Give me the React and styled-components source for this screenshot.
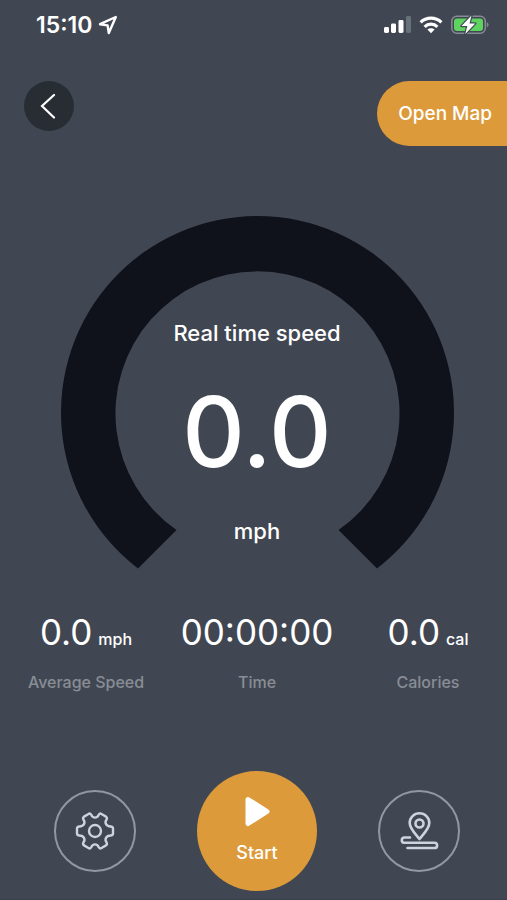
import React from 'react'
import styled, { createGlobalStyle } from 'styled-components'

const GlobalStyle = createGlobalStyle`
  * {
    box-sizing: border-box;
  }
  body {
    margin: 0;
    background: #414752;
  }
`
const Screen = styled.div`
  display: flex;
  flex-direction: column;
  min-height: 100vh;
  border-bottom: 1px solid #3b3d49;
  background: #414752;
  color: #fff;
  font-family: 'Inter', 'Liberation Sans', sans-serif;
`
const StatusBar = styled.header`
  display: flex;
  align-items: center;
  justify-content: space-between;
  height: 50px;
  padding: 0 18px 0 36px;
`
const StatusGroup = styled.div`
  display: flex;
  align-items: center;
  gap: ${props => props.$gap};
`
const Clock = styled.span`
  font-size: 23px;
  font-weight: 600;
  line-height: 28px;
`
const TopBar = styled.nav`
  display: flex;
  align-items: flex-start;
  justify-content: space-between;
  padding: 31px 0 0 24px;
`
const BackButton = styled.button`
  display: flex;
  align-items: center;
  justify-content: center;
  width: 50px;
  height: 50px;
  padding: 0;
  border: 0;
  border-radius: 50%;
  background: #272d33;
`
const MapButton = styled.button`
  height: 65px;
  padding: 0 15px 0 21px;
  border: 0;
  border-radius: 33px 0 0 33px;
  background: #dc9a3a;
  color: #fff;
  font: 500 19px/24px 'Inter', sans-serif;
`
const Main = styled.main`
  display: flex;
  flex-direction: column;
  padding: 69px 0 0 7px;
`
const Gauge = styled.section`
  display: grid;
  justify-items: center;

  > * {
    grid-area: 1 / 1;
  }
`
const Readout = styled.div`
  display: flex;
  flex-direction: column;
  align-items: center;
  gap: 34px;
  padding-top: 103px;
`
const GaugeText = styled.span`
  font-size: 22px;
  font-weight: 500;
  line-height: 30px;
`
const Speed = styled.strong`
  font-size: 97px;
  font-weight: 500;
  line-height: 100px;
`
const Stats = styled.dl`
  display: grid;
  grid-template-columns: repeat(3, 1fr);
  gap: 13px;
  margin: 40px 0 0;
`
const Stat = styled.div`
  display: flex;
  flex-direction: column-reverse;
  align-items: center;
  gap: 16px;
`
const StatLabel = styled.dt`
  color: #888d96;
  font-size: 16px;
  font-weight: 500;
  line-height: 24px;
`
const StatValue = styled.dd`
  display: flex;
  align-items: baseline;
  gap: 6px;
  margin: 0;
  font-size: 35px;
  line-height: 44px;
  white-space: nowrap;
`
const Unit = styled.small`
  font-size: 16px;
  font-weight: 500;
  line-height: 20px;
`
const Controls = styled.footer`
  display: flex;
  align-items: center;
  justify-content: space-between;
  padding: 77px 47px 0 47px;
`
const RoundButton = styled.button`
  display: flex;
  align-items: center;
  justify-content: center;
  width: 82px;
  height: 82px;
  padding: 0;
  border: 2px solid #9297a1;
  border-radius: 50%;
  background: transparent;
  color: #ced2dc;
`
const StartButton = styled.button`
  display: flex;
  flex-direction: column;
  align-items: center;
  gap: 14px;
  width: 120px;
  height: 120px;
  padding: 25px 0 0;
  border: 0;
  border-radius: 50%;
  background: #dc9a3a;
  color: #fff;
  font: 500 18px/24px 'Inter', sans-serif;
`

const LocationIcon = () =>
  <svg width="20" height="20" viewBox="0 0 20 20" fill="none" stroke="#fff" strokeWidth="2.4" strokeLinejoin="round">
    <path d="M17.8 2 L2 9.2 L9.6 10.4 L10.8 18 Z" />
  </svg>

const SignalIcon = () =>
  <svg width="27" height="18" viewBox="0 0 27 18" fill="#fff">
    <rect x="0" y="11" width="5" height="6" rx="1.4" />
    <rect x="7" y="7.5" width="5" height="9.5" rx="1.4" />
    <rect x="14.5" y="4" width="5" height="13" rx="1.4" />
    <rect x="22" y="0" width="5" height="17" rx="1.4" fill="#687078" />
  </svg>

const WifiIcon = () =>
  <svg width="24" height="18" viewBox="0 0 24 18" fill="none" stroke="#fff" strokeWidth="3.2">
    <path d="M1.6 6.4 A15 15 0 0 1 22.4 6.4" />
    <path d="M5.6 10.8 A9.2 9.2 0 0 1 18.4 10.8" />
    <path d="M12 17.2 L8.4 13.6 A5.2 5.2 0 0 1 15.6 13.6 Z" fill="#fff" stroke="none" />
  </svg>

const BatteryIcon = () =>
  <svg width="38" height="20" viewBox="0 0 38 20">
    <rect x="0.8" y="1.3" width="33.5" height="17" rx="5" fill="none" stroke="#858b92" strokeWidth="1.5" />
    <path d="M35.8 7 Q37.6 8 37.6 9.8 Q37.6 11.6 35.8 12.6 Z" fill="#858b92" />
    <rect x="3" y="3.5" width="29" height="12.6" rx="3" fill="#5fd35f" />
    <path d="M20.5 0.5 L10.5 11 H16.3 L14.3 19 L24.3 8.5 H18.5 Z" fill="#fff" stroke="#414752" strokeWidth="2.4" paintOrder="stroke" strokeLinejoin="round" />
  </svg>

const BackIcon = () =>
  <svg width="18" height="26" viewBox="0 0 18 26" fill="none" stroke="#fff" strokeWidth="2.2" strokeLinecap="round">
    <path d="M14 2 L2 13 L14 24.5" />
  </svg>

const GaugeArc = () =>
  <svg width="393" height="355" viewBox="0 0 393 355" fill="#10121b">
    <path d="M77 353.5 A196.5 196.5 0 1 1 316 353.5 L277.5 315 A142 142 0 1 0 115.5 315 Z" />
  </svg>

const GearIcon = () =>
  <svg width="40" height="40" viewBox="0 0 40 40" fill="none" stroke="currentColor" strokeWidth="2.4" strokeLinejoin="round">
    <circle cx="20" cy="20" r="6" />
    <path d="M13.5 3 Q15 2 16.2 3.6 Q17.4 6.6 20 6.6 Q22.6 6.6 23.8 3.6 Q25 2 26.5 3 L31 5.6 Q32.5 6.7 31.6 8.5 Q29.8 11 31 13.2 Q32.3 15.4 35.5 15.5 Q38 15.7 38 17.5 V22.5 Q38 24.3 35.5 24.5 Q32.3 24.6 31 26.8 Q29.8 29 31.6 31.5 Q32.5 33.3 31 34.4 L26.5 37 Q25 38 23.8 36.4 Q22.6 33.4 20 33.4 Q17.4 33.4 16.2 36.4 Q15 38 13.5 37 L9 34.4 Q7.5 33.3 8.4 31.5 Q10.2 29 9 26.8 Q7.7 24.6 4.5 24.5 Q2 24.3 2 22.5 V17.5 Q2 15.7 4.5 15.5 Q7.7 15.4 9 13.2 Q10.2 11 8.4 8.5 Q7.5 6.7 9 5.6 Z" />
  </svg>

const RouteIcon = () =>
  <svg width="40" height="40" viewBox="0 0 40 40" fill="none" stroke="currentColor" strokeWidth="2.6" strokeLinecap="round" strokeLinejoin="round">
    <path d="M20.5 28 C16 22.5 10.7 17.5 10.7 12 A9.8 9.8 0 0 1 30.3 12 C30.3 17.5 25 22.5 20.5 28 Z" />
    <circle cx="20.5" cy="12.5" r="4" />
    <path d="M11 26.5 H5 A2.7 2.7 0 0 0 5 31.8 H35.5 A2.6 2.6 0 0 1 35.5 37 H8.5" />
  </svg>

const PlayIcon = () =>
  <svg width="25" height="31" viewBox="0 0 25 31" fill="#fff" stroke="#fff" strokeWidth="5" strokeLinejoin="round">
    <path d="M3 3.5 L22 15.5 L3 27.5 Z" />
  </svg>

const stats = [
  { label: 'Average Speed', value: '0.0', unit: 'mph' },
  { label: 'Time', value: '00:00:00' },
  { label: 'Calories', value: '0.0', unit: 'cal' },
]

const App = () =>
  <Screen>
    <GlobalStyle />
    <StatusBar>
      <StatusGroup $gap="6px">
        <Clock>15:10</Clock>
        <LocationIcon />
      </StatusGroup>
      <StatusGroup $gap="8px">
        <SignalIcon />
        <WifiIcon />
        <BatteryIcon />
      </StatusGroup>
    </StatusBar>
    <TopBar>
      <BackButton aria-label="Back"><BackIcon /></BackButton>
      <MapButton>Open Map</MapButton>
    </TopBar>
    <Main>
      <Gauge>
        <GaugeArc />
        <Readout>
          <GaugeText>Real time speed</GaugeText>
          <Speed>0.0</Speed>
          <GaugeText>mph</GaugeText>
        </Readout>
      </Gauge>
      <Stats>
        {stats.map(({ label, value, unit }) =>
          <Stat key={label}>
            <StatLabel>{label}</StatLabel>
            <StatValue>
              {value}
              {unit && <Unit>{unit}</Unit>}
            </StatValue>
          </Stat>
        )}
      </Stats>
      <Controls>
        <RoundButton aria-label="Settings"><GearIcon /></RoundButton>
        <StartButton>
          <PlayIcon />
          Start
        </StartButton>
        <RoundButton aria-label="Route"><RouteIcon /></RoundButton>
      </Controls>
    </Main>
  </Screen>

export default App
